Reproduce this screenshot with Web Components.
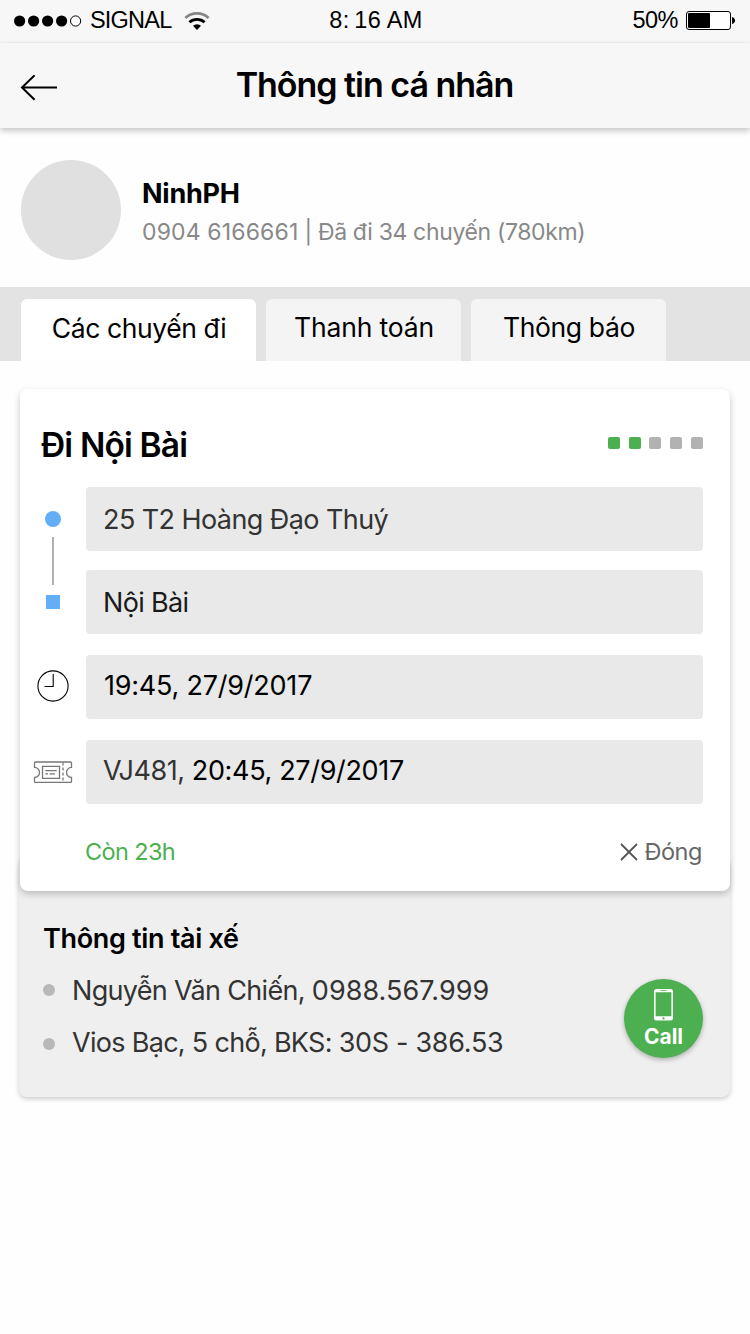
<!DOCTYPE html>
<html lang="vi">
<head>
<meta charset="utf-8">
<title>Thông tin cá nhân</title>
<style>
    body {
        min-height: 100vh;
        margin: 0;
        background: #fefefe;
        color: #000;
        font-family: Inter, "Open Sans", sans-serif;
        font-weight: 400;
        font-kerning: normal;
        white-space: nowrap;
    }
    trip-field.later {
        --nudge: 2px;
    }
    .place { color: #333; }
    .dest { color: #1a1a1a; }
</style>
</head>
<body>
    <status-bar carrier="SIGNAL" time="8:16 AM" battery="50"></status-bar>
    <app-header>Thông tin cá nhân</app-header>
    <user-profile>
        <span slot="name">NinhPH</span>
        <span slot="info"><span style="letter-spacing: 0.15px">0904 6166661</span> | Đã đi 34 chuyến (780km)</span>
    </user-profile>
    <tab-bar>
        <tab-item selected style="letter-spacing: -0.4px">Các chuyến đi</tab-item>
        <tab-item style="letter-spacing: -0.15px">Thanh toán</tab-item>
        <tab-item style="letter-spacing: -0.36px">Thông báo</tab-item>
    </tab-bar>
    <trip-card step="2" steps="5">
        <span slot="title">Đi Nội Bài</span>
        <trip-field class="place" icon="from" style="letter-spacing: -0.58px">25 T2 Hoàng Đạo Thuý</trip-field>
        <trip-field class="dest" icon="to" style="letter-spacing: -0.68px">Nội Bài</trip-field>
        <trip-field class="later" icon="clock" style="letter-spacing: -0.22px">19:45, 27/9/2017</trip-field>
        <trip-field class="later" icon="ticket" style="letter-spacing: -0.34px"><span class="place" style="letter-spacing: -0.45px">VJ481, </span>20:45, 27/9/2017</trip-field>
        <span slot="remaining">Còn 23h</span>
        <span slot="close">Đóng</span>
    </trip-card>
    <driver-panel>
        <span slot="title">Thông tin tài xế</span>
        <driver-line style="letter-spacing: -0.68px">Nguyễn Văn Chiến, <span style="letter-spacing: 0.05px">0988.567.999</span></driver-line>
        <driver-line style="letter-spacing: -0.7px">Vios Bạc, 5 chỗ, BKS: <span style="letter-spacing: -0.3px">30S - 386.53</span></driver-line>
        <call-button slot="action">Call</call-button>
    </driver-panel>

<script>
class StatusBar extends HTMLElement {

    constructor() {
        super();
        this.attachShadow({ mode: 'open' });
        this.shadowRoot.innerHTML = `
            <style>
                :host {
                    display: grid;
                    grid-template-columns: 1fr auto 1fr;
                    align-items: center;
                    box-sizing: border-box;
                    height: 43px;
                    padding: 0 15px 1px 14px;
                    border-bottom: 1px solid #f2f2f2;
                    background: #f7f7f7;
                    font: 23.5px/41px "Liberation Sans", Arial, sans-serif;
                }
                div {
                    display: flex;
                    align-items: center;
                }
                svg { display: block; }
                .carrier { margin: 0 13px 0 8px; letter-spacing: -0.8px; }
                .time { display: block; letter-spacing: 0.4px; padding-left: 3px; }
                .time .colon { letter-spacing: 5px; }
                .right { justify-content: flex-end; }
                .percent { letter-spacing: -0.5px; margin-right: 8px; }
            </style>
            <div class="left">
                <svg width="68" height="14" viewBox="0 0 68 14">
                    <circle cx="5.6" cy="7" r="5.6"/>
                    <circle cx="19.6" cy="7" r="5.6"/>
                    <circle cx="33.6" cy="7" r="5.6"/>
                    <circle cx="47.6" cy="7" r="5.6"/>
                    <circle cx="61.6" cy="7" r="5.1" fill="#fff" stroke="#000"/>
                </svg>
                <span class="carrier"></span>
                <svg width="26" height="20" viewBox="0 0 26 20" fill="none" stroke="#000" stroke-width="2.8">
                    <path d="M1.4 6.9A17 17 0 0 1 24.6 6.9" stroke="#858585"/>
                    <path d="M5.4 11.2A11.4 11.4 0 0 1 20.6 11.2"/>
                    <path d="M13 19L9 14.8A6 6 0 0 1 17 14.8Z" fill="#000" stroke="none"/>
                </svg>
            </div>
            <div class="time"></div>
            <div class="right">
                <span class="percent"></span>
                <svg width="49" height="20" viewBox="0 0 49 20">
                    <rect x=".5" y=".5" width="44" height="18" rx="2.5" fill="#fff" stroke="#000"/>
                    <rect class="level" x="2" y="2" height="15" rx="1"/>
                    <path d="M46 6Q49 7 49 9.5Q49 12 46 13Z"/>
                </svg>
            </div>
        `;
    }

    connectedCallback() {
        const root = this.shadowRoot;
        const battery = this.getAttribute('battery');
        const [hour, rest] = this.getAttribute('time').split(':');
        root.querySelector('.carrier').textContent = this.getAttribute('carrier');
        root.querySelector('.time').innerHTML = `${hour}<span class="colon">:</span>${rest}`;
        root.querySelector('.percent').textContent = battery + '%';
        root.querySelector('.level').setAttribute('width', battery * 0.44);
    }

}

class AppHeader extends HTMLElement {

    constructor() {
        super();
        this.attachShadow({ mode: 'open' });
        this.shadowRoot.innerHTML = `
            <style>
                :host {
                    display: grid;
                    grid-template-columns: 37px 1fr 37px;
                    align-items: center;
                    box-sizing: border-box;
                    height: 85px;
                    padding: 0 20px;
                    background: #f7f7f7;
                    box-shadow: 0 3px 6px rgba(0, 0, 0, 0.22);
                    font-size: 34px;
                    font-weight: 600;
                    letter-spacing: -1.02px;
                    line-height: 40px;
                }
                svg { display: block; margin-top: 4px; }
                h1 { margin: 0 1px 1px 0; font: inherit; text-align: center; }
            </style>
            <svg width="38" height="26" viewBox="0 0 38 26" fill="none" stroke="#000" stroke-width="2">
                <path d="M14.6 .3L2 12.5L14.6 24.7M2 12.5H37"/>
            </svg>
            <h1><slot></slot></h1>
        `;
    }

}

class UserProfile extends HTMLElement {

    constructor() {
        super();
        this.attachShadow({ mode: 'open' });
        this.shadowRoot.innerHTML = `
            <style>
                :host {
                    display: flex;
                    box-sizing: border-box;
                    height: 159px;
                    padding: 32px 21px;
                }
                .avatar {
                    width: 100px;
                    height: 100px;
                    margin-right: 21px;
                    border-radius: 50%;
                    background: #e0e0e0;
                }
                .name {
                    margin-top: 16px;
                    font-size: 27px;
                    font-weight: 700;
                    letter-spacing: -0.25px;
                    line-height: 36px;
                }
                .info {
                    margin-top: 4px;
                    color: #888;
                    font-size: 23px;
                    letter-spacing: -0.36px;
                    line-height: 32px;
                }
            </style>
            <div class="avatar"></div>
            <div>
                <div class="name"><slot name="name"></slot></div>
                <div class="info"><slot name="info"></slot></div>
            </div>
        `;
    }

}

class TabBar extends HTMLElement {

    constructor() {
        super();
        this.attachShadow({ mode: 'open' });
        this.shadowRoot.innerHTML = `
            <style>
                :host {
                    display: flex;
                    gap: 10px;
                    box-sizing: border-box;
                    height: 74px;
                    padding: 12px 21px 0;
                    background: #e3e3e3;
                }
            </style>
            <slot></slot>
        `;
    }

}

class TabItem extends HTMLElement {

    constructor() {
        super();
        this.attachShadow({ mode: 'open' });
        this.shadowRoot.innerHTML = `
            <style>
                :host {
                    box-sizing: border-box;
                    width: 195px;
                    padding: 8px 0 0 1px;
                    border-radius: 6px 6px 0 0;
                    background: #f4f4f4;
                    font-size: 26.5px;
                    line-height: 41px;
                    text-align: center;
                }
                :host([selected]) {
                    width: 235px;
                    padding-top: 9px;
                    background: #fff;
                }
            </style>
            <slot></slot>
        `;
    }

}

class TripCard extends HTMLElement {

    constructor() {
        super();
        this.attachShadow({ mode: 'open' });
        this.shadowRoot.innerHTML = `
            <style>
                :host {
                    display: block;
                    position: relative;
                    z-index: 1;
                    box-sizing: border-box;
                    height: 502px;
                    margin: 28px 20px 0;
                    border-radius: 8px;
                    background: #fff;
                    box-shadow: 0 3px 7px rgba(0, 0, 0, 0.22);
                }
                header, footer {
                    display: flex;
                    justify-content: space-between;
                }
                header {
                    height: 98px;
                    box-sizing: border-box;
                    padding: 35px 27px 0 21px;
                }
                h2 {
                    margin: 0;
                    font-size: 33.5px;
                    font-weight: 600;
                    letter-spacing: -0.84px;
                    line-height: 42px;
                }
                .steps { display: flex; gap: 8.8px; padding-top: 13px; }
                .steps i {
                    width: 12px;
                    height: 12px;
                    border-radius: 2px;
                    background: #b2b2b2;
                }
                .steps i.done { background: #4caf50; }
                .fields { display: grid; row-gap: 21px; }
                footer {
                    padding: 32px 28px 0 65px;
                    font-size: 23.5px;
                    line-height: 32px;
                }
                .remaining { color: #4caf50; letter-spacing: -0.64px; }
                .close { display: flex; align-items: center; color: #666; letter-spacing: -0.45px; }
                .close svg { margin-right: 6px; }
            </style>
            <header>
                <h2><slot name="title"></slot></h2>
                <div class="steps"></div>
            </header>
            <div class="fields"><slot></slot></div>
            <footer>
                <div class="remaining"><slot name="remaining"></slot></div>
                <div class="close">
                    <svg width="18" height="18" viewBox="0 0 18 18" stroke="#555" stroke-width="1.8"><path d="M1 1L17 17M17 1L1 17"/></svg>
                    <slot name="close"></slot>
                </div>
            </footer>
        `;
    }

    connectedCallback() {
        const step = Number(this.getAttribute('step'));
        const steps = Number(this.getAttribute('steps'));
        let html = '';
        for (let i = 0; i < steps; i++) {
            html += i < step ? '<i class="done"></i>' : '<i></i>';
        }
        this.shadowRoot.querySelector('.steps').innerHTML = html;
    }

}

const FIELD_ICONS = {
    // the connector line hangs below the circle, between the two places
    from: `
        <svg width="32" height="100" viewBox="0 0 32 100" style="margin-bottom: -68px">
            <circle cx="16" cy="16" r="8" fill="#64aef5"/>
            <path d="M16 34V82" stroke="#b0b0b0" stroke-width="2"/>
        </svg>`,
    to: `
        <svg width="32" height="32" viewBox="0 0 32 32">
            <path d="M9 9H23V23H9Z" fill="#64aef5"/>
        </svg>`,
    clock: `
        <svg width="32" height="32" viewBox="0 0 32 32" fill="none" stroke="#000" stroke-width="1.1" style="margin: -3px 1px 0 0">
            <circle cx="16" cy="16" r="15.1"/>
            <path d="M16.2 4V16.5H7.5"/>
        </svg>`,
    ticket: `
        <svg width="40" height="24" viewBox="0 0 40 24" fill="none" stroke="#777" stroke-width="1.3">
            <path d="M2.5 2H37.5Q38.5 2 38.5 3V7.4A5 5 0 0 0 38.5 17.4V21.4Q38.5 22.4 37.5 22.4H2.5Q1.5 22.4 1.5 21.4V17.4A5 5 0 0 0 1.5 7.4V3Q1.5 2 2.5 2Z"/>
            <path d="M9.5 6.4H26.5V18.4H9.5Z"/>
            <path d="M12.3 10.6H23.7M12.3 13.8H15M16.5 13.8H22"/>
            <path d="M30 2.4V22.4" stroke-dasharray="3 2"/>
        </svg>`
};

class TripField extends HTMLElement {

    constructor() {
        super();
        this.attachShadow({ mode: 'open' });
        this.shadowRoot.innerHTML = `
            <style>
                :host {
                    display: grid;
                    grid-template-columns: 66px 1fr;
                    margin-right: 27px;
                    font-size: 27px;
                }
                :host([icon=to]) { margin-top: -2px; }
                .icon {
                    display: flex;
                    align-items: center;
                    justify-content: center;
                    height: 64px;
                }
                .value {
                    box-sizing: border-box;
                    height: 64px;
                    padding: 0 17px;
                    border-radius: 4px;
                    background: #e9e9e9;
                    line-height: calc(66px - 2 * var(--nudge, 0px));
                }
                :host([icon=clock]) .value { padding-left: 18px; }
                svg { display: block; flex: none; }
            </style>
            <div class="icon"></div>
            <div class="value"><slot></slot></div>
        `;
    }

    connectedCallback() {
        this.shadowRoot.querySelector('.icon').innerHTML = FIELD_ICONS[this.getAttribute('icon')];
    }

}

class DriverPanel extends HTMLElement {

    constructor() {
        super();
        this.attachShadow({ mode: 'open' });
        this.shadowRoot.innerHTML = `
            <style>
                :host {
                    display: flex;
                    align-items: flex-start;
                    justify-content: space-between;
                    box-sizing: border-box;
                    height: 240px;
                    margin: -34px 20px 0 19px;
                    padding: 64px 27px 0 24px;
                    border-radius: 8px;
                    background: #efefef;
                    box-shadow: 0 2px 5px rgba(0, 0, 0, 0.2);
                }
                h3 {
                    margin: 0 0 8px;
                    font-size: 27px;
                    font-weight: 600;
                    letter-spacing: -0.32px;
                    line-height: 36px;
                }
                .action { margin-top: 58px; }
            </style>
            <div>
                <h3><slot name="title"></slot></h3>
                <slot></slot>
            </div>
            <div class="action"><slot name="action"></slot></div>
        `;
    }

}

class DriverLine extends HTMLElement {

    constructor() {
        super();
        this.attachShadow({ mode: 'open' });
        this.shadowRoot.innerHTML = `
            <style>
                :host {
                    display: flex;
                    align-items: center;
                    color: #333;
                    font-size: 27px;
                    line-height: 52px;
                }
                i {
                    width: 12px;
                    height: 12px;
                    margin: 0 17px 2px 0;
                    border-radius: 50%;
                    background: #b8b8b8;
                }
                :host(:nth-of-type(2)) i { margin: 2px 17px 0 0; }
            </style>
            <i></i><div><slot></slot></div>
        `;
    }

}

class CallButton extends HTMLElement {

    constructor() {
        super();
        this.attachShadow({ mode: 'open' });
        this.shadowRoot.innerHTML = `
            <style>
                :host {
                    display: flex;
                    flex-direction: column;
                    align-items: center;
                    box-sizing: border-box;
                    width: 79px;
                    height: 79px;
                    padding-top: 10px;
                    border-radius: 50%;
                    background: #4caf50;
                    box-shadow: 0 2px 5px rgba(0, 0, 0, 0.28);
                    color: #fff;
                    font-size: 21px;
                    font-weight: 700;
                    line-height: 24px;
                }
                svg { display: block; margin-bottom: 4px; }
            </style>
            <svg width="19" height="32" viewBox="0 0 19 32">
                <path fill="#fff" fill-rule="evenodd" d="M2.5 0H16.5Q19 0 19 2.5V29Q19 31.5 16.5 31.5H2.5Q0 31.5 0 29V2.5Q0 0 2.5 0ZM1.6 3.2V27.3H17.4V3.2ZM6.5 1.3V2H12.5V1.3ZM9.5 28.3A1.1 1.1 0 1 0 9.5 30.5A1.1 1.1 0 1 0 9.5 28.3Z"/>
            </svg>
            <slot></slot>
        `;
    }

}

customElements.define('status-bar', StatusBar);
customElements.define('app-header', AppHeader);
customElements.define('user-profile', UserProfile);
customElements.define('tab-bar', TabBar);
customElements.define('tab-item', TabItem);
customElements.define('trip-card', TripCard);
customElements.define('trip-field', TripField);
customElements.define('driver-panel', DriverPanel);
customElements.define('driver-line', DriverLine);
customElements.define('call-button', CallButton);
</script>
</body>
</html>
